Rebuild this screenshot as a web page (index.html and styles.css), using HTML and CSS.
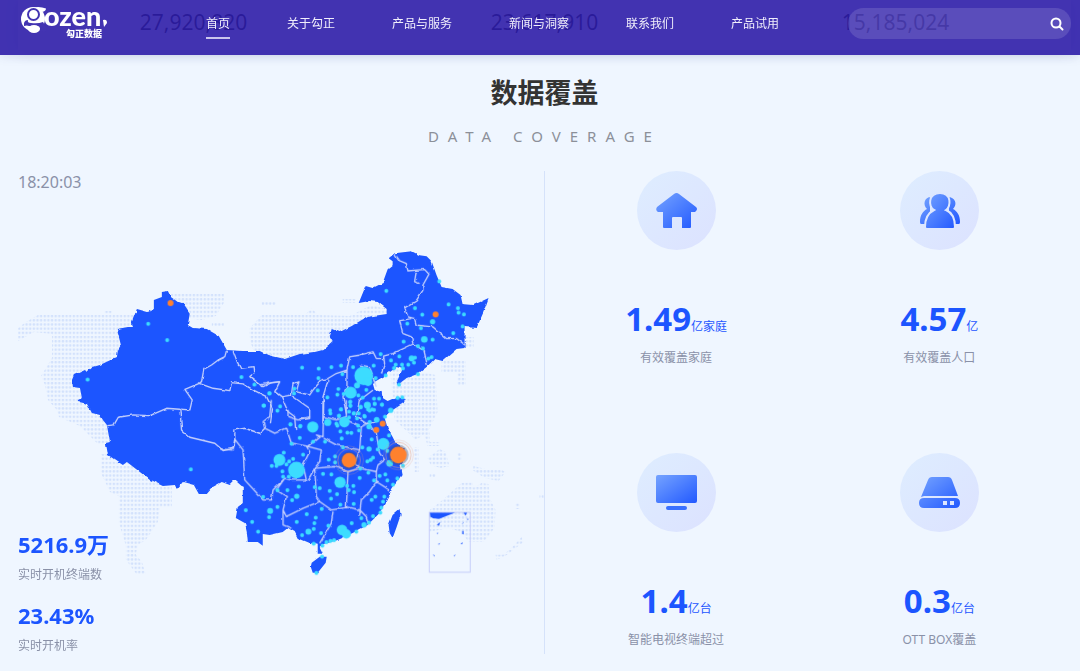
FILE: index.html
```html
<!DOCTYPE html>
<html lang="zh-CN">
<head>
<meta charset="utf-8">
<title>勾正数据</title>
<link rel="stylesheet" href="styles.css">
</head>
<body>
<header class="topbar">
  <a class="logo" href="#" aria-label="gozen 勾正数据">
    <svg width="90" height="44" viewBox="20 0 90 44">
      <circle class="logo-fill" cx="33" cy="19" r="12"/>
      <path class="logo-fill" d="M33 7.500 Q40 6 46 8.500 Q46 11 42 12Z"/>
      <path class="logo-gap" d="M24 26 Q27 25 29 26 H37 Q41 27 40 32 L46 31 V27 L43 22 Q38 24 31 23 Q27 23 28 20 Q25 20 24 23Z"/>
      <ellipse class="logo-fill" cx="34" cy="29" rx="6" ry="4"/>
      <circle class="logo-ring" cx="33.500" cy="14.500" r="5.500"/>
      <circle class="logo-fill" cx="33.500" cy="14.500" r="3.500"/>
      <text class="logo-word" x="44" y="26">ozen</text>
      <path class="logo-fill" d="M103 20 Q107 19 107 23 L104 27Z"/>
      <text class="logo-sub" x="66" y="37">勾正数据</text>
    </svg>
  </a>
  <nav class="nav">
    <a class="nav-link is-active" href="#">首页</a>
    <a class="nav-link" href="#">关于勾正</a>
    <a class="nav-link" href="#">产品与服务</a>
    <a class="nav-link" href="#">新闻与洞察</a>
    <a class="nav-link" href="#">联系我们</a>
    <a class="nav-link" href="#">产品试用</a>
  </nav>
  <form class="search">
    <input class="search-input" type="text" aria-label="搜索">
    <button class="search-button" type="button" aria-label="搜索">
      <svg width="14" height="14" viewBox="0 0 14 14"><circle cx="6" cy="6" r="4.500"/><path d="M9.500 9.500 L12.500 12.500"/></svg>
    </button>
  </form>
</header>

<section class="totals">
  <div class="total">27,920,820</div>
  <div class="total">23,617,910</div>
  <div class="total">15,185,024</div>
</section>

<main class="coverage">
  <h1 class="title">数据覆盖</h1>
  <p class="subtitle">DATA COVERAGE</p>
  <div class="columns">
    <section class="live">
      <svg class="map" viewBox="18 171 526 483" role="img" aria-label="中国地图">
        <defs>
          <pattern id="dots" x="17.500" y="293" width="3.640" height="4.200" patternUnits="userSpaceOnUse"><rect class="world-dot" x=".6" y=".8" width="2.400" height="2.400" rx=".8"/></pattern>
          <filter id="coast" x="-5%" y="-5%" width="110%" height="110%" color-interpolation-filters="sRGB">
            <feTurbulence type="fractalNoise" baseFrequency=".14" numOctaves="2" seed="4" result="n"/>
            <feDisplacementMap in="SourceGraphic" in2="n" scale="3" xChannelSelector="R" yChannelSelector="G"/>
            <feGaussianBlur stdDeviation=".35"/>
          </filter>
        </defs>
        <g fill="url(#dots)">
          <path d="M18 328 L26 322 38 315 72 315 104 315 105 311 112 311 112 315 160 315 160 420 110 443 98 444 80 426 59 417 57 410 48 400 45 385 41 376 52 358 52 334 34 332 18 341Z"/>
          <path d="M101 454 L120 455 172 480 172 507 160 508 158 522 146 540 138 545 136 555 142 562 146 575 137 575 126 560 126 546 119 523 119 496 110 492 101 473Z"/>
          <path d="M170 293 H224 V303 L216 316 202 320 185 318Z M212 323 h12 v4 h-12Z"/>
          <path d="M250 328 L262 315 H305 L312 308 318 315 350 316 372 305 390 310 390 350 260 360 Q248 345 250 328Z M262 301 h14 v4 h-14Z M343 299 h13 v4 h-13Z"/>
          <path d="M390 365 L436 375 438 412 428 432 416 440 408 432 395 420Z M463 337 h11 v10 h-13Z M442 361 h24 v24 h-8 v-12 h-16Z M424 432 h6 v10 h10 v4 h-12Z"/>
          <path d="M414 447 h5 v25 h-4Z M428 458 l12 -9 6 3 4 14 -9 2 -10 -3Z M458 452 h4 v8 h-4Z M474 466 l12 3 14 0 6 3 -7 9 -14 -3 -12 -8Z M430 474 h6 v4 h-6Z"/>
          <path d="M430 510 L443 500 462 483 473 482 474 488 482 483 489 484 490 498 496 510 495 528 484 542 469 542 462 532 449 528 429 532Z M496 555 h8 l10 -9 8 -9 2 5 -18 14 -9 4Z M516 502 h4 v7 h-4Z M540 495 h4 v4 h-4Z"/>
        </g>
        <g class="land" filter="url(#coast)">
          <path d="M162 292 168 291 171 297 178 302 184 304 190 313 188 325 193 328 207 329 219 336 227 350 243 351 260 351 268 355 285 359 300 354 315 352 323 350 333 341 330 336 332 329 340 332 352 326 367 317 387 314 387 309 378 302 370 301 359 303 366 286 373 288 383 283 384 280 388 269 393 265 393 261 389 258 395 253 412 251 420 255 427 256 432 261 437 275 442 287 453 289 461 295 463 304 474 305 489 298 484 312 477 328 465 327 465 348 457 349 443 361 435 359 427 367 418 374 407 378 398 385 397 382 403 369 397 367 385 376 373 383 375 390 382 392 383 398 388 401 397 397 406 399 404 403 393 410 385 418 388 428 393 437 396 443 405 448 403 462 400 465 402 475 393 488 387 500 380 513 368 525 353 533 337 540 323 545 320 548 323 554 318 554 318 545 310 543 298 538 295 532 288 528 283 532 270 535 263 534 263 546 258 542 248 542 247 532 245 523 236 518 238 507 243 503 243 487 235 480 230 485 222 482 213 487 207 494 199 494 194 485 183 482 177 489 175 485 163 486 150 480 140 472 127 462 123 465 108 455 106 443 110 442 107 425 103 420 100 415 92 413 87 404 78 402 78 400 82 398 80 388 73 387 72 380 74 375 85 370 87 372 93 367 100 365 117 357 118 350 121 345 117 329 128 327 133 327 132 322 137 309 148 312 154 309 154 300 162 297Z"/>
          <path d="M312 563 320 557 327 557 326 563 318 573 313 573 311 567Z M400 509 401 515 397 527 393 538 390 533 389 525 393 515Z"/>
        </g>
        <g class="borders" filter="url(#coast)">
          <g transform="translate(0 160) scale(.3333)">
            <path d="M680 572 675 590 655 600 635 615 612 628 605 665 598 670 640 685 690 692 695 668 730 672 760 690 800 710 818 745 812 790 M700 572 712 605 722 625 760 620 762 640 750 650 790 680 815 668 840 665 M598 670 555 688 577 720 570 750 543 748"/>
          </g>
          <g transform="translate(0 400) scale(.3333)">
            <path d="M322 77 342 75 355 52 400 45 450 47 500 25 540 28 545 90 570 112 645 130 670 152 700 145 705 125 705 90 735 85 780 100 795 85"/>
          </g>
          <g transform="translate(260 230) scale(.3333)">
            <path d="M405 70 420 92 440 100 445 122 495 118 508 132 490 165 490 180 470 212 435 233 445 260 465 265 470 285 520 290 560 325 590 325 614 342 M470 125 465 155 480 160 M455 265 420 272 430 310 455 320 460 340 490 360 500 405 M460 342 400 370 372 378 375 400 365 430 M372 385 350 385 340 365 300 375 270 380 262 420 230 430 205 445 185 450 160 480 150 495 130 490 110 485 118 455 100 460 95 495 65 500 45 485 60 455 20 460 0 465 M65 500 85 545 105 560 108 600 M95 495 115 510 150 535 150 565 120 570 M205 450 190 500 190 580 M262 420 262 470 250 500 260 550 M340 480 300 510 290 560 320 580 350 575 M300 405 330 410 350 470"/>
          </g>
          <g transform="translate(220 400) scale(.3333)">
            <path d="M45 118 40 150 0 147 M45 118 70 150 75 240 130 300 155 300 160 270 195 235 M135 85 130 65 150 50 155 0 M135 85 165 100 200 85 215 130 260 138 270 155 250 195 260 240 215 240 195 235 170 270 200 290 190 330 200 350 250 325 300 305 M260 138 305 150 300 185 285 205 290 290 300 305 335 330 385 322 420 330 440 350 447 375 M205 30 205 50 235 60 270 50 M265 138 300 110 290 105 310 110 312 0 M312 115 350 135 420 150 405 190 420 205 470 215 475 195 495 180 480 160 470 100 445 70 425 80 420 150 M285 205 345 200 385 215 420 205 M385 215 380 325 M420 345 425 300 450 275 470 245 510 270 M470 215 470 245 M190 330 190 375 215 385 M340 335 335 370 300 430 M312 50 350 60 380 50 380 0 M380 60 425 80 M285 205 265 240"/>
          </g>
        </g>
        <g class="cities" transform="translate(0 160) scale(.3333)">
          <path d="M445 491h0M502 540h0M263 659h0M725 651h0M764 674h0M809 700h0M792 737h0M573 928h0"/>
          <circle class="hot" cx="512" cy="429" r="9"/>
        </g>
        <g class="cities" transform="translate(260 230) scale(.3333)">
          <path d="M380 182h0M539 154h0M567 223h0M466 234h0M595 234h0M597 248h0M613 253h0M488 254h0M443 281h0M484 294h0M609 289h0M581 309h0M519 329h0M432 335h0M475 348h0M490 355h0M506 386h0M516 381h0M363 372h0M394 391h0M419 379h0M466 383h0M463 398h0M446 404h0M408 404h0M427 404h0M403 414h0M430 415h0M475 432h0M418 464h0M127 413h0M177 416h0M215 411h0M244 407h0M280 411h0M342 407h0M248 432h0M176 444h0M174 481h0M348 444h0M378 436h0M236 477h0M233 494h0M252 492h0M29 490h0M104 476h0M103 490h0M203 502h0M12 527h0M53 542h0M61 529h0M414 504h0M428 502h0M272 515h0M272 527h0M343 506h0M358 506h0M345 521h0M367 524h0M303 532h0M325 538h0M337 538h0M211 541h0M244 538h0M268 545h0M283 550h0M238 558h0M315 560h0M92 583h0M121 589h0M230 581h0M376 560h0M292 565h0M295 587h0M330 576h0M320 480h0M296 496h0M309 503h0"/>
          <circle cx="519" cy="275" r="8"/><circle cx="494" cy="328" r="10"/><circle cx="456" cy="385" r="9"/><circle cx="312" cy="437" r="28"/><circle cx="325" cy="455" r="13"/><circle cx="292" cy="466" r="9"/><circle cx="273" cy="488" r="18"/><circle cx="323" cy="525" r="10"/><circle cx="393" cy="541" r="8"/><circle cx="351" cy="569" r="8"/><circle cx="204" cy="577" r="11"/>
          <circle class="hot" cx="528" cy="253" r="9"/>
        </g>
        <g class="cities" transform="translate(220 400) scale(.3333)">
          <path d="M212 73h0M242 78h0M240 114h0M215 131h0M280 125h0M316 125h0M353 77h0M332 40h0M358 47h0M364 28h0M366 115h0M370 142h0M391 6h0M392 18h0M417 40h0M402 40h0M388 52h0M423 20h0M434 48h0M465 12h0M487 14h0M463 30h0M450 32h0M383 98h0M395 99h0M362 94h0M418 91h0M508 106h0M471 91h0M456 118h0M428 142h0M474 148h0M460 173h0M443 184h0M453 180h0M503 153h0M550 198h0M192 158h0M208 184h0M220 177h0M250 164h0M200 193h0M156 198h0M170 198h0M188 214h0M207 230h0M190 230h0M327 179h0M346 169h0M346 187h0M310 222h0M335 223h0M285 262h0M300 265h0M237 260h0M173 271h0M203 271h0M130 291h0M217 301h0M330 273h0M334 296h0M382 258h0M401 258h0M387 271h0M403 277h0M420 234h0M422 206h0M446 218h0M480 228h0M497 223h0M503 241h0M463 241h0M520 254h0M533 235h0M352 283h0M467 290h0M456 300h0M494 290h0M490 305h0M402 312h0M362 314h0M306 327h0M173 321h0M148 352h0M78 331h0M97 366h0M115 395h0M261 343h0M288 353h0M284 370h0M231 366h0M247 406h0M282 387h0M304 400h0M326 377h0M396 370h0M425 355h0M410 395h0M482 338h0M460 349h0M485 323h0M308 437h0M282 431h0M320 427h0M332 423h0M307 470h0M290 519h0M343 421h0M448 368h0"/>
          <circle cx="179" cy="180" r="18"/><circle cx="230" cy="210" r="25"/><circle cx="361" cy="247" r="17"/><circle cx="231" cy="289" r="8"/><circle cx="151" cy="333" r="9"/><circle cx="266" cy="395" r="9"/><circle cx="367" cy="390" r="16"/><circle cx="380" cy="402" r="14"/><circle cx="433" cy="375" r="8"/><circle cx="491" cy="132" r="18"/><circle cx="279" cy="81" r="17"/><circle cx="374" cy="66" r="16"/><circle cx="443" cy="16" r="10"/><circle cx="471" cy="60" r="8"/><circle cx="448" cy="80" r="8"/><circle cx="448" cy="147" r="8"/><circle cx="510" cy="190" r="10"/>
          <circle class="hot" cx="489" cy="71" r="9"/><circle class="hot" cx="470" cy="90" r="9"/>
          <circle class="halo" cx="388" cy="181" r="27"/><circle class="ring" cx="388" cy="181" r="34"/><circle class="ring faint" cx="388" cy="181" r="43"/><circle class="hot" cx="388" cy="181" r="22"/>
          <circle class="halo" cx="536" cy="165" r="31"/><circle class="ring" cx="536" cy="165" r="38"/><circle class="ring faint" cx="536" cy="165" r="45"/><circle class="hot" cx="536" cy="165" r="25"/>
        </g>
        <g class="inset" transform="translate(220 400) scale(.3333)">
          <rect x="629" y="337" width="123" height="180"/>
          <path d="M631 338 H706 L658 357 640 355 632 350Z M732 338 h10 l-4 9Z M652 374 l10 -8 -4 12Z M728 393 h4 v10 h-4Z M723 433 l6 -7 -1 7Z M702 470 l5 -8 -1 6Z M655 433 l7 -4 -4 5Z M641 462 l4 5 -2 3Z M652 402 l3 -6 v6Z M676 496 l6 -4Z M727 374 l4 -8 v4Z M743 356 h3 v4 h-3Z"/>
        </g>
      </svg>
      <time class="clock">18:20:03</time>
      <dl class="live-stats">
        <div class="live-stat"><dd class="live-value">5216.9万</dd><dt class="live-label">实时开机终端数</dt></div>
        <div class="live-stat"><dd class="live-value">23.43%</dd><dt class="live-label">实时开机率</dt></div>
      </dl>
    </section>

    <section class="metrics">
      <svg class="defs" width="0" height="0" aria-hidden="true"><defs><linearGradient id="blue" x1="0" y1="0" x2="1" y2="1"><stop offset="0" stop-color="#75a3ff"/><stop offset="1" stop-color="#2259ff"/></linearGradient></defs></svg>
      <article class="metric">
        <div class="badge"><svg width="79" height="79" viewBox="0 0 79 79"><path fill="url(#blue)" d="M37 23 Q39.500 21 42 23 L59 36 Q61 38 59 40 L58 41 H54 V56 Q54 57 53 57 H45 V47 Q45 46 44 46 H36 Q35 46 35 47 V57 H27 Q26 57 26 56 V41 H21 Q18 39 20 36Z"/></svg></div>
        <p class="value">1.49<span class="unit">亿家庭</span></p>
        <p class="label">有效覆盖家庭</p>
      </article>
      <article class="metric">
        <div class="badge"><svg width="79" height="79" viewBox="0 0 79 79"><path fill="url(#blue)" d="M32 26 C25 25 22 33 27 38 C23 40 20 44 20 51 Q20 53 21 53 H30 V26Z M48 26 C55 26 58 33 53 38 C57 40 60 44 60 51 Q60 53 59 53 H50Z"/><path class="person" fill="url(#blue)" d="M40 22 C52 22 51 36 46 39 C53 42 55 48 55 56 Q55 58 53 58 H27 Q25 58 25 56 C25 48 28 42 34 39 C28 36 28 22 40 22Z"/></svg></div>
        <p class="value">4.57<span class="unit">亿</span></p>
        <p class="label">有效覆盖人口</p>
      </article>
      <article class="metric">
        <div class="badge"><svg width="79" height="79" viewBox="0 0 79 79"><rect fill="url(#blue)" x="19" y="22" width="41" height="28" rx="2"/><rect fill="#3a70ff" x="29" y="53" width="21" height="4" rx="2"/></svg></div>
        <p class="value">1.4<span class="unit">亿台</span></p>
        <p class="label">智能电视终端超过</p>
      </article>
      <article class="metric">
        <div class="badge"><svg width="79" height="79" viewBox="0 0 79 79"><path fill="url(#blue)" fill-rule="evenodd" d="M32 24 H48 Q51 24 52 27 L58 43 Q56 43 55 43 H24 L21 44 L28 27 Q29 24 32 24Z M24 45 H55 Q60 45 60 50 Q60 55 55 55 H24 Q19 55 19 50 Q19 45 24 45Z M43 48 V52 H47 V48Z M50 48 V52 H54 V48Z"/></svg></div>
        <p class="value">0.3<span class="unit">亿台</span></p>
        <p class="label">OTT BOX覆盖</p>
      </article>
    </section>
  </div>
</main>
</body>
</html>
```
FILE: styles.css
```css
* { box-sizing: border-box; }
body {
  margin: 0;
  background: #eff6ff;
  color: #8a91a8;
  font: 12px/18px "Noto Sans", "Noto Sans CJK SC", sans-serif;
}
h1, p, dl, dd { margin: 0; }

.topbar {
  position: fixed;
  z-index: 2;
  top: 0;
  left: 0;
  right: 0;
  display: flex;
  align-items: flex-start;
  height: 55px;
  padding: 0 9px 0 20px;
  background: rgba(46, 29, 169, .9);
  box-shadow: 0 1px 10px rgba(60, 70, 140, .15);
}
.logo { width: 90px; }
.logo svg { display: block; overflow: visible; }
.logo-fill { fill: #fff; }
.logo-gap { fill: #4334b2; }
.logo-ring { fill: none; stroke: #4334b2; stroke-width: 2; }
.logo-word { fill: #fff; font: 900 27px Lato, sans-serif; }
.logo-sub { fill: #fff; font: 900 9px "Noto Sans CJK SC", sans-serif; }
.nav { display: flex; gap: 57px; margin-left: 96px; padding-top: 14px; }
.nav-link {
  padding-bottom: 5px;
  border-bottom: 2px solid transparent;
  color: #f1effc;
  font-family: "Noto Sans CJK SC", sans-serif;
  text-decoration: none;
  white-space: nowrap;
}
.nav-link.is-active { border-color: #cbc6ed; }
.search {
  display: flex;
  align-items: center;
  width: 223px;
  height: 31px;
  margin: 8px 0 0 auto;
  padding: 0 7px 0 16px;
  border-radius: 16px;
  background: rgba(255, 255, 255, .13);
}
.search-input { flex: 1; min-width: 0; border: 0; outline: 0; background: none; color: #fff; }
.search-button { width: 14px; height: 14px; padding: 0; border: 0; background: none; }
.search-button svg { display: block; fill: none; stroke: #fff; stroke-width: 2; stroke-linecap: round; }

.totals {
  display: grid;
  grid-template-columns: repeat(3, 1fr);
  height: 50px;
  margin: 0 9px 0 18px;
  background: #fff;
  box-shadow: 0 0 16px rgba(40, 60, 120, .2);
}
.total { color: #111; font-size: 21px; line-height: 44px; text-align: center; }

.coverage { padding: 24px 9px 17px 18px; }
.title { color: #333; font-size: 27px; line-height: 38px; text-align: center; }
.subtitle { margin-top: 14px; color: #8c9099; font-size: 15px; line-height: 20px; letter-spacing: 9px; text-align: center; }
.columns { display: grid; grid-template-columns: 1fr 1fr; min-height: 483px; margin-top: 25px; }

.live {
  position: relative;
  display: flex;
  flex-direction: column;
  justify-content: space-between;
  border-right: 1px solid #d5e2fa;
}
.map { position: absolute; top: 0; left: 0; width: 100%; height: 100%; }
.clock, .live-stats { position: relative; }
.clock { font-size: 16px; line-height: 22px; }
.live-stats { display: grid; gap: 15px; }
.live-stat { display: grid; gap: 6px; }
.live-value { color: #1c55ff; font-size: 22px; font-weight: 700; line-height: 34px; }
.live-label { line-height: 16px; }

.world-dot { fill: #d2e1fc; }
.land { fill: #1c55ff; }
.borders { fill: none; stroke: #c6d1fc; stroke-width: 4; stroke-linejoin: round; }
.cities { fill: #3cdcff; }
.cities path { fill: none; stroke: #3cdcff; stroke-width: 12; stroke-linecap: round; }
.cities .hot { fill: #ff812e; }
.cities .halo { fill: #4d4b66; fill-opacity: .4; }
.cities .ring { fill: none; stroke: #e8a184; stroke-width: 2; stroke-opacity: .8; }
.cities .faint { stroke-opacity: .4; }
.inset { fill: #1c55ff; }
.inset rect { fill: none; stroke: #c6cef9; stroke-width: 3; }

.metrics { display: grid; grid-template-columns: 1fr 1fr; grid-template-rows: 282px 200px; }
.defs { position: absolute; }
.metric { display: flex; flex-direction: column; align-items: center; }
.badge { width: 79px; height: 79px; border-radius: 50%; background: linear-gradient(135deg, #deedff, #dce2ff); }
.badge svg { display: block; }
.person { stroke: #dde7ff; stroke-width: 2; }
.value { margin-top: 48px; color: #1c55ff; font-size: 33px; font-weight: 700; line-height: 42px; }
.unit { font-size: 12px; font-weight: 400; }
.label { margin-top: 1px; }
```
